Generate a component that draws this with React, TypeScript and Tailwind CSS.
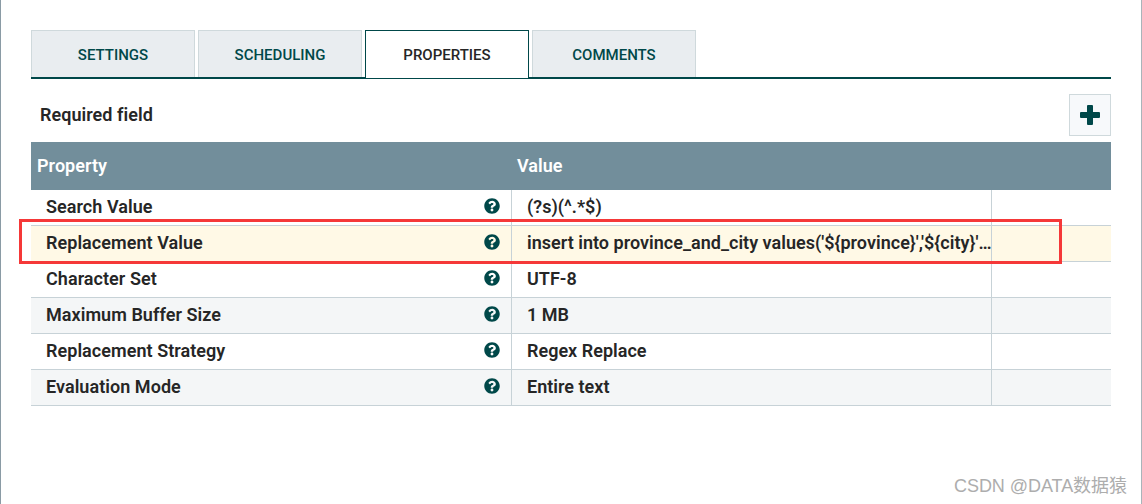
import { FaQuestionCircle } from 'react-icons/fa';

const tabs = [
  { label: 'SETTINGS' },
  { label: 'SCHEDULING' },
  { label: 'PROPERTIES', active: true },
  { label: 'COMMENTS' },
];

const rows = [
  { name: 'Search Value', value: '(?s)(^.*$)', bg: 'bg-white' },
  { name: 'Replacement Value', value: "insert into province_and_city values('${province}','${city}'…", bg: 'bg-[#fff9e6]' },
  { name: 'Character Set', value: 'UTF-8', bg: 'bg-white' },
  { name: 'Maximum Buffer Size', value: '1 MB', bg: 'bg-[#f4f6f7]' },
  { name: 'Replacement Strategy', value: 'Regex Replace', bg: 'bg-white' },
  { name: 'Evaluation Mode', value: 'Entire text', bg: 'bg-[#f4f6f7]' },
];

const App = () => {
  return (
    <div className="relative h-[504px] w-[1142px] overflow-hidden border-x border-l-[#8a9ba5] border-r-[#a9b4ba] bg-white font-['Roboto',sans-serif]">
      <div className="ml-[30px] w-[1080px] pt-[30px]">
        <div className="flex h-[49px] gap-[3px] border-b-2 border-[#004849]">
          {tabs.map((tab) => (
            <div
              key={tab.label}
              className={
                tab.active
                  ? "flex h-[48px] w-[164px] items-center justify-center border border-b-0 border-[#004849] bg-white pt-[2px] text-[15px] font-medium text-[#262626]"
                  : "flex h-[47px] w-[164px] items-center justify-center border border-b-0 border-[#cfd9dc] bg-[#e9edf0] pt-[2px] text-[15px] font-medium text-[#004849]"
              }
            >
              {tab.label}
            </div>
          ))}
        </div>

        <div className="flex h-[63px] items-center justify-between">
          <span className="mt-[9px] ml-[9px] text-[18px] leading-none font-semibold tracking-[0.05px] text-[#262626]">Required field</span>
          <button className="mt-[9px] flex h-[42px] w-[42px] items-center justify-center border border-[#cfd9dc] bg-[#f7f9fb] text-[#004849]">
            <svg width="20" height="20" viewBox="0 0 20 20" fill="currentColor">
              <path d="M8 0h4a1 1 0 0 1 1 1v6h6a1 1 0 0 1 1 1v4a1 1 0 0 1-1 1h-6v6a1 1 0 0 1-1 1H8a1 1 0 0 1-1-1v-6H1a1 1 0 0 1-1-1V8a1 1 0 0 1 1-1h6V1a1 1 0 0 1 1-1z" />
            </svg>
          </button>
        </div>

        <div className="flex h-[48px] items-center bg-[#728e9b] pb-[2px] text-[18px] font-semibold tracking-[0.05px] text-white">
          <span className="w-[486px] pl-[6px]">Property</span>
          <span>Value</span>
        </div>

        {rows.map((row) => (
          <div key={row.name} className={`flex h-[36px] border-b border-[#c7d2d7] text-[18px] font-semibold tracking-[0.05px] text-[#262626] ${row.bg}`}>
            <div className="flex w-[481px] items-center justify-between border-r border-[#c7d2d7] pr-[11px] pb-[2px] pl-[15px]">
              <span>{row.name}</span>
              <FaQuestionCircle size={16} className="mb-[2px] text-[#004849]" />
            </div>
            <div className="flex w-[480px] items-center border-r border-[#c7d2d7] pb-[2px] pl-[15px]">
              <span className="whitespace-nowrap tracking-[0.02px]">{row.value}</span>
            </div>
          </div>
        ))}
      </div>

      <div className="absolute top-[219px] left-[18px] h-[45px] w-[1043px] border-[3px] border-[#f53838]" />

      <div className="absolute top-[474px] left-[953px] text-[18px] leading-[24px] tracking-[-0.05px] text-[#adadad] font-['Liberation_Sans','Noto_Sans_CJK_SC',sans-serif]">
        CSDN @DATA数据猿
      </div>
    </div>
  );
};

export default App;
